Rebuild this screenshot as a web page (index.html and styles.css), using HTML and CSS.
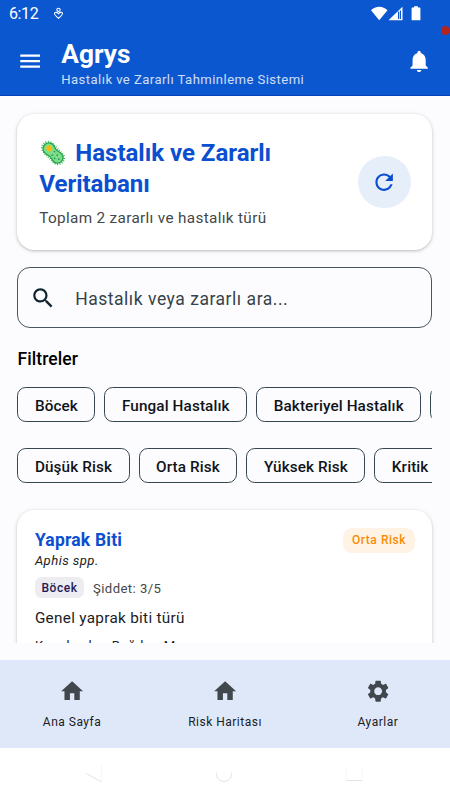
FILE: index.html
```html
<!DOCTYPE html>
<html lang="tr">
<head>
<meta charset="utf-8">
<title>Agrys</title>
<link rel="stylesheet" href="styles.css">
</head>
<body>
<header class="top">
  <div class="status">
    <span class="clock">6:12</span>
    <svg class="status-app" viewBox="0 0 12 14"><g fill="none" stroke="#fff" stroke-width="1.2"><circle cx="6" cy="3" r="1.8"/><path d="M1.8 6.2C2.7 5.3 4.700 5.500 6 7.300 7.300 5.500 9.300 5.300 10.200 6.200 11.200 7.700 9.600 9.300 6 12.200 2.400 9.300.8 7.700 1.800 6.200Z"/></g></svg>
    <svg class="status-system" viewBox="0 0 50 16"><path fill="#fff" d="M0 4.300C4.500-.4 12-.4 16.500 4.300L8.200 14.300ZM31.500 .8V14.300H17.500Z"/><path fill="#0b57d0" d="M27 5.500h1.300v7.500h-1.300zM29 4.500h1v8.500h-1z"/><path fill="#fff" d="M41 1.600h2V.3h4v1.300h2q.4 0 .4.400V13.700q0 .6-.6.600H41.200q-.6 0-.6-.6V2q0-.4.400-.4Z"/></svg>
  </div>
  <div class="appbar">
    <svg class="icon menu" viewBox="0 0 24 24"><path d="M3 18h18v-2H3v2zm0-5h18v-2H3v2zm0-7v2h18V6H3z"/></svg>
    <div class="brand">
      <h1>Agrys</h1>
      <p>Hastalık ve Zararlı Tahminleme Sistemi</p>
    </div>
    <svg class="icon bell" viewBox="0 0 24 24"><path d="M12 22c1.100 0 2-.9 2-2h-4c0 1.100.89 2 2 2zm6-6v-5c0-3.070-1.640-5.640-4.500-6.320V4c0-.83-.67-1.500-1.500-1.500s-1.500.67-1.500 1.500v.68C7.630 5.360 6 7.920 6 11v5l-2 2v1h16v-1l-2-2z"/></svg>
  </div>
  <span class="alert-dot"></span>
</header>
<main>
  <section class="card hero">
    <div class="hero-text">
      <h2><svg class="microbe" viewBox="0 0 28 28"><g transform="rotate(46 14 14)"><rect x="1" y="8" width="26" height="12" rx="6" fill="none" stroke="#2fae4e" stroke-width="2.400" stroke-dasharray=".8 1.500"/><path d="M8 8.200C11 8.200 12 9.600 14.500 9.400S18 8.500 20.500 8.500A5.500 5.500 0 0 1 20.500 19.500C18 19.500 17 18.500 14.500 18.700S11 19.800 8 19.800A5.800 5.800 0 0 1 8 8.200Z" fill="#7edc8c" stroke="#20a447" stroke-width="1.300"/><ellipse cx="8" cy="13.500" rx="3.300" ry="2.600" fill="#fbb90d"/><g fill="#249b4b"><circle cx="14" cy="12" r=".8"/><circle cx="15" cy="16" r=".9"/><circle cx="18.500" cy="12.500" r=".9"/><circle cx="19" cy="16.500" r=".8"/><circle cx="22.500" cy="14" r=".9"/></g></g></svg><span>Hastalık ve Zararlı</span><br>Veritabanı</h2>
      <p>Toplam 2 zararlı ve hastalık türü</p>
    </div>
    <div class="refresh"><svg class="icon" viewBox="0 0 24 24"><path d="M17.650 6.350C16.200 4.900 14.210 4 12 4c-4.420 0-7.990 3.580-7.990 8s3.570 8 7.990 8c3.730 0 6.840-2.550 7.730-6h-2.080c-.82 2.330-3.040 4-5.650 4-3.310 0-6-2.690-6-6s2.690-6 6-6c1.660 0 3.140.69 4.220 1.780L13 11h7V4l-2.350 2.350z"/></svg></div>
  </section>
  <div class="search">
    <svg class="icon" viewBox="0 0 24 24"><path d="M15.500 14h-.79l-.28-.27C15.410 12.590 16 11.110 16 9.500 16 5.910 13.090 3 9.500 3S3 5.910 3 9.500 5.910 16 9.500 16c1.610 0 3.090-.59 4.230-1.570l.27.28v.79l5 4.990L20.490 19l-4.990-5zm-6 0C7.010 14 5 11.990 5 9.500S7.010 5 9.500 5 14 7.010 14 9.500 11.990 14 9.500 14z"/></svg>
    <span>Hastalık veya zararlı ara...</span>
  </div>
  <h3>Filtreler</h3>
  <div class="chips">
    <span class="chip">Böcek</span><span class="chip">Fungal Hastalık</span><span class="chip">Bakteriyel Hastalık</span><span class="chip">Viral Hastalık</span>
  </div>
  <div class="chips risks">
    <span class="chip">Düşük Risk</span><span class="chip">Orta Risk</span><span class="chip">Yüksek Risk</span><span class="chip">Kritik Risk</span>
  </div>
  <div class="list">
    <article class="card item">
      <div class="item-head">
        <div>
          <h4>Yaprak Biti</h4>
          <p class="latin">Aphis spp.</p>
        </div>
        <span class="risk">Orta Risk</span>
      </div>
      <div class="meta"><span class="tag">Böcek</span><span class="severity">Şiddet: 3/5</span></div>
      <p class="desc">Genel yaprak biti türü</p>
      <p class="crops">Konukçular: Buğday, Mısır</p>
    </article>
  </div>
</main>
<nav class="tabs">
  <div class="tab"><svg class="icon" viewBox="0 0 24 24"><path d="M10 20v-6h4v6h5v-8h3L12 3 2 12h3v8z"/></svg><span>Ana Sayfa</span></div>
  <div class="tab"><svg class="icon" viewBox="0 0 24 24"><path d="M10 20v-6h4v6h5v-8h3L12 3 2 12h3v8z"/></svg><span>Risk Haritası</span></div>
  <div class="tab"><svg class="icon" viewBox="0 0 24 24"><path d="M19.140 12.940c.04-.3.060-.61.060-.94 0-.32-.02-.64-.07-.94l2.030-1.580c.18-.14.23-.41.120-.61l-1.920-3.320c-.12-.22-.37-.29-.59-.22l-2.390.96c-.5-.38-1.030-.7-1.620-.94L14.400 2.810c-.04-.24-.24-.41-.48-.41h-3.840c-.24 0-.43.170-.47.410L9.250 5.350C8.660 5.590 8.120 5.920 7.630 6.290L5.240 5.330c-.22-.08-.47 0-.59.220L2.740 8.870c-.12.210-.08.470.120.610l2.030 1.580C4.840 11.360 4.800 11.690 4.800 12s.02.640.070.940l-2.030 1.580c-.18.140-.23.410-.12.610l1.920 3.320c.12.220.37.290.59.220l2.390-.96c.5.380 1.030.700 1.620.940l.36 2.540c.05.240.240.410.480.410h3.840c.24 0 .44-.17.470-.41l.36-2.540c.59-.24 1.130-.56 1.620-.94l2.390.96c.22.080.470 0 .59-.22l1.920-3.320c.12-.22.070-.47-.12-.61l-2.010-1.580zM12 15.600c-1.980 0-3.600-1.620-3.600-3.600s1.620-3.600 3.600-3.600 3.600 1.620 3.600 3.600-1.620 3.600-3.600 3.600z"/></svg><span>Ayarlar</span></div>
</nav>
<footer class="system-nav">
  <svg viewBox="0 0 20 20"><path class="faint" d="M17.500 1V17"/><path d="M2.500 9.500L17.500 18"/></svg>
  <svg viewBox="0 0 20 20"><path class="faint" d="M2.500 7V10M17.500 7V10"/><path d="M2.500 10A7.500 7.500 0 0 0 17.500 10"/></svg>
  <svg viewBox="0 0 20 20"><path class="faint" d="M2 2V16M18 2V16"/><path d="M2 16.500H18"/></svg>
</footer>
</body>
</html>
```
FILE: styles.css
```css
* { box-sizing: border-box; }
body {
  margin: 0;
  width: 450px;
  height: 800px;
  overflow: hidden;
  display: flex;
  flex-direction: column;
  background: #fcfcff;
  color: #1a1c1e;
  font-family: Roboto, sans-serif;
}
h1, h2, h3, h4, p { margin: 0; }
svg { display: block; flex: none; }
.icon { width: 26.250px; height: 26.250px; fill: currentColor; }

.top { position: relative; flex: none; height: 96px; background: #0b57d0; color: #fff; border-bottom: 1px solid #0842b8; }
.status { display: flex; align-items: center; height: 26px; padding: 1px 29px 0 9px; }
.clock { width: 44px; font-size: 16px; letter-spacing: -.4px; }
.status-app { width: 11px; height: 13px; }
.status-system { width: 50px; height: 16px; margin-left: auto; }
.appbar { display: flex; align-items: center; height: 70px; padding: 0 17.500px 0 17px; }
.brand { flex: 1; margin-left: 18px; padding-top: 5px; }
.brand h1 { font-size: 26.250px; line-height: 30px; font-weight: 700; letter-spacing: 0; }
.brand p { font-size: 13.100px; line-height: 18px; letter-spacing: .44px; opacity: .8; margin-top: 2px; }
.alert-dot { position: absolute; right: 0; top: 26px; width: 9px; height: 9px; border-radius: 50%; background: #b3261e; }

main { flex: 1; min-height: 0; display: flex; flex-direction: column; padding: 17.500px 17.600px 0 17.400px; }
.card { background: #fff; border-radius: 17.500px; box-shadow: 0 1px 3px rgba(0,0,0,.22), 0 1px 6px rgba(0,0,0,.06); }
.hero { flex: none; display: flex; align-items: center; height: 136px; padding: 1px 21.900px 0; }
.hero-text { flex: 1; padding-top: 4px; }
.hero h2 { color: #0b4fd0; font-size: 24.060px; line-height: 30.600px; font-weight: 700; letter-spacing: -.03px; }
.microbe { display: inline-block; width: 28px; height: 28px; vertical-align: -6px; margin-right: 8px; }
.hero p { margin-top: 8.750px; font-size: 15.300px; line-height: 21.900px; letter-spacing: .33px; color: #44474a; }
.refresh { width: 52.500px; height: 52.500px; border-radius: 50%; background: #e6eefa; color: #0b4fd0; display: flex; align-items: center; justify-content: center; }

.search { flex: none; height: 61px; margin-top: 17.500px; border: 1px solid #4a565e; border-radius: 13px; display: flex; align-items: center; padding: 1px 12px 0; color: #10242e; }
.search span { margin-left: 18.500px; padding-top: 1px; font-size: 17.500px; letter-spacing: .53px; color: #36434a; }
h3 { margin-top: 17.500px; font-size: 17.500px; line-height: 26px; font-weight: 500; letter-spacing: .1px; color: #000; }
.chips { flex: none; display: flex; gap: 9px; margin-top: 15.500px; overflow: hidden; }
.risks { margin-top: 26.250px; }
.chip { flex: none; height: 35px; padding: 2px 16.500px 0; border: 1px solid #36474f; border-radius: 8.750px; display: flex; align-items: center; font-size: 15.300px; font-weight: 500; letter-spacing: .11px; color: #101418; white-space: nowrap; }

.list { flex: 1; min-height: 0; margin: 17px -17.600px 17.500px -17.400px; padding: 10px 17.600px 0 17.400px; overflow: hidden; }
.item { height: 220px; padding: 17.500px; }
.item-head { display: flex; justify-content: space-between; align-items: flex-start; }
h4 { font-size: 17.500px; line-height: 25px; font-weight: 700; letter-spacing: .2px; color: #0b4fd0; }
.latin { margin-top: -1px; font-size: 13.100px; line-height: 17.500px; font-style: italic; letter-spacing: .44px; }
.risk { height: 25px; padding: 0 8.750px; border-radius: 8.750px; background: #fff3e6; color: #fb8c00; font-size: 12px; line-height: 25px; font-weight: 500; letter-spacing: .55px; }
.meta { display: flex; align-items: center; margin-top: 8px; }
.tag { height: 21px; padding: 0 6.500px; border-radius: 6.500px; background: #edecf0; color: #1f1b58; font-size: 12px; line-height: 22px; font-weight: 500; letter-spacing: .55px; }
.severity { margin-left: 9px; padding-top: 1px; font-size: 13.100px; letter-spacing: .44px; color: #44474a; }
.desc { margin-top: 10px; font-size: 15.300px; line-height: 21.900px; letter-spacing: .3px; }
.crops { margin-top: 7px; font-size: 13.100px; line-height: 17.500px; letter-spacing: .44px; }

.tabs { flex: none; height: 87.500px; display: flex; gap: 8.750px; background: #dfe8f9; }
.tab { flex: 1; display: flex; flex-direction: column; align-items: center; padding-top: 17.500px; color: #41484d; }
.tab span { margin-top: 10.500px; font-size: 12px; line-height: 17.500px; letter-spacing: .5px; color: #1a1c1e; white-space: nowrap; }
.system-nav { flex: none; height: 52.500px; background: #fff; display: flex; justify-content: space-between; padding: 16px 86px 0 84px; }
.system-nav svg { width: 20px; height: 20px; fill: none; stroke: #e2e2e2; stroke-width: 1; }
.system-nav .faint { stroke: #f6f6f6; }
```
